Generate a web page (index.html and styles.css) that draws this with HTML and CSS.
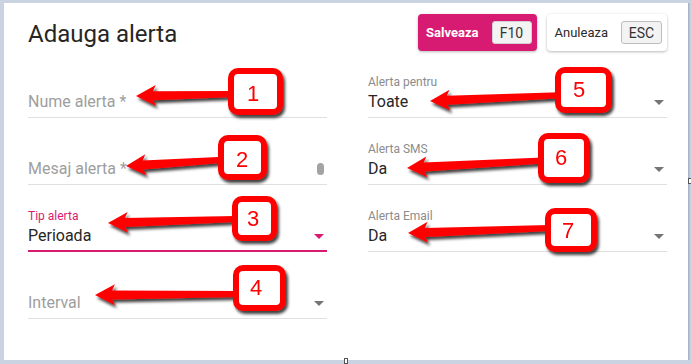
FILE: index.html
```html
<!DOCTYPE html>
<html lang="ro">
<head>
<meta charset="utf-8">
<title>Adauga alerta</title>
<link rel="stylesheet" href="styles.css">
</head>
<body>
<div class="page">
  <div class="dialog">
    <header class="dlg-head">
      <h1 class="dlg-title">Adauga alerta</h1>
      <div class="actions">
        <button class="btn btn-save"><span class="btn-label">Salveaza</span><kbd class="key">F10</kbd></button>
        <button class="btn btn-cancel"><span class="btn-label">Anuleaza</span><kbd class="key key-esc">ESC</kbd></button>
      </div>
    </header>
    <div class="form">
      <div class="col">
        <div class="field">
          <div class="field-row"><span class="placeholder">Nume alerta *</span></div>
        </div>
        <div class="field">
          <div class="field-row"><span class="placeholder">Mesaj alerta *</span><span class="scroll-pill"></span></div>
        </div>
        <div class="field field-focus">
          <div class="field-label">Tip alerta</div>
          <div class="field-row"><span class="value">Perioada</span><span class="caret"></span></div>
        </div>
        <div class="field">
          <div class="field-row"><span class="placeholder">Interval</span><span class="caret"></span></div>
        </div>
      </div>
      <div class="col">
        <div class="field">
          <div class="field-label">Alerta pentru</div>
          <div class="field-row"><span class="value">Toate</span><span class="caret"></span></div>
        </div>
        <div class="field">
          <div class="field-label">Alerta SMS</div>
          <div class="field-row"><span class="value">Da</span><span class="caret"></span></div>
        </div>
        <div class="field">
          <div class="field-label">Alerta Email</div>
          <div class="field-row"><span class="value">Da</span><span class="caret"></span></div>
        </div>
      </div>
    </div>
  </div>

  <span class="handle handle-bottom"></span>
  <span class="handle handle-right"></span>

  <svg class="annot" width="691" height="364" viewBox="0 0 691 364" xmlns="http://www.w3.org/2000/svg">
    <defs>
      <filter id="sh" x="-30%" y="-40%" width="160%" height="190%">
        <feDropShadow dx="2" dy="3" stdDeviation="1.6" flood-color="#000" flood-opacity="0.75"/>
      </filter>
    </defs>
    <g class="arrows" filter="url(#sh)">
      <polygon transform="translate(136 96) rotate(-1.2)" points="0,0 20,-10.5 17,-4.5 98,-3 98,3 17,4.5 20,10.5"/>
      <polygon transform="translate(126 166) rotate(-3.6)" points="0,0 20,-10.5 17,-4.5 98,-3 98,3 17,4.5 20,10.5"/>
      <polygon transform="translate(108 223) rotate(-1.8)" points="0,0 20,-10.5 17,-4.5 128,-3 128,3 17,4.5 20,10.5"/>
      <polygon transform="translate(95 295) rotate(-0.4)" points="0,0 20,-10.5 17,-4.5 142,-3 142,3 17,4.5 20,10.5"/>
      <polygon transform="translate(430 101) rotate(-2.5)" points="0,0 20,-10.5 17,-4.5 130,-3 130,3 17,4.5 20,10.5"/>
      <polygon transform="translate(407 168) rotate(-3.2)" points="0,0 20,-10.5 17,-4.5 136,-3 136,3 17,4.5 20,10.5"/>
      <polygon transform="translate(408 233) rotate(-2)" points="0,0 20,-10.5 17,-4.5 142,-3 142,3 17,4.5 20,10.5"/>
    </g>
    <g class="tags">
      <g class="tag"><rect x="231" y="71" width="49" height="41" rx="7"/><text x="253" y="101">1</text></g>
      <g class="tag"><rect x="221" y="138" width="43" height="39" rx="7"/><text x="242" y="167">2</text></g>
      <g class="tag"><rect x="235" y="199" width="39" height="39" rx="7"/><text x="253" y="226">3</text></g>
      <g class="tag"><rect x="236" y="268" width="47" height="40" rx="7"/><text x="256" y="295">4</text></g>
      <g class="tag"><rect x="558" y="70" width="51" height="40" rx="7"/><text x="579" y="97">5</text></g>
      <g class="tag"><rect x="541" y="136" width="46" height="44" rx="7"/><text x="561" y="165">6</text></g>
      <g class="tag"><rect x="548" y="211" width="46" height="38" rx="7"/><text x="568" y="238">7</text></g>
    </g>
  </svg>
</div>
</body>
</html>
```

FILE: styles.css
```css
* { box-sizing: border-box; }

html, body {
  margin: 0;
  padding: 0;
  width: 691px;
  height: 364px;
  overflow: hidden;
  background: #c9d3e2;
  font-family: Roboto, "Noto Sans", "Liberation Sans", sans-serif;
}

.page {
  position: relative;
  width: 691px;
  height: 364px;
  padding: 3px 3px 4px 4px;
}

.dialog {
  width: 684px;
  height: 357px;
  background: #fff;
  padding: 11px 21px 0 24px;
  box-shadow: 1px 0 0 #a9b5c7, 2px 0 0 #b7c2d2;
}

.dlg-head {
  display: flex;
  align-items: center;
  justify-content: space-between;
  height: 37px;
}

.dlg-title {
  margin: 0;
  font-size: 24px;
  font-weight: 400;
  color: #262626;
  line-height: 28px;
  padding-top: 2px;
}

.actions {
  display: flex;
  gap: 10px;
}

.btn {
  display: flex;
  align-items: center;
  height: 37px;
  padding: 0 5px 0 8px;
  border: none;
  border-radius: 4px;
  font-family: Roboto, "Liberation Sans", sans-serif;
  font-size: 13px;
  box-shadow: 0 1px 3px rgba(0, 0, 0, 0.28);
}

.btn-save {
  background: #d81b72;
  color: #fff;
  font-weight: 700;
}

.btn-cancel {
  background: #fff;
  color: #2a2a2a;
  font-weight: 400;
}

.btn-label {
  margin-right: 13px;
}

.key {
  display: flex;
  align-items: center;
  justify-content: center;
  width: 40px;
  height: 23px;
  border: 1px solid #d2d2d2;
  border-radius: 3px;
  background: #f3f3f3;
  color: #333;
  font-family: Roboto, "Liberation Sans", sans-serif;
  font-size: 14px;
  font-weight: 400;
}

.key-esc {
  width: 41px;
  border-color: #bdbdbd;
}

.form {
  display: grid;
  grid-template-columns: 1fr 1fr;
  column-gap: 41px;
}

.col {
  display: flex;
  flex-direction: column;
}

.field {
  height: 67px;
  display: flex;
  flex-direction: column;
  justify-content: flex-end;
  padding-bottom: 3px;
  border-bottom: 1px solid #e0e0e0;
}

.field-focus {
  border-bottom: 2px solid #d81b72;
  padding-bottom: 2px;
}

.field-label {
  font-size: 12px;
  line-height: 16px;
  color: #8c8c8c;
}

.field-focus .field-label {
  color: #d81b72;
}

.field-row {
  display: flex;
  align-items: center;
  justify-content: space-between;
  height: 24px;
  font-size: 16px;
  line-height: 24px;
}

.placeholder {
  color: #9e9e9e;
}

.value {
  color: #262626;
}

.caret {
  width: 0;
  height: 0;
  border-left: 5px solid transparent;
  border-right: 5px solid transparent;
  border-top: 5px solid #757575;
  margin-right: 3px;
}

.field-focus .caret {
  border-top-color: #d81b72;
}

.scroll-pill {
  width: 7px;
  height: 12px;
  border-radius: 4px;
  background: #a3a3a3;
  margin-right: 3px;
}

.handle {
  position: absolute;
  width: 4px;
  height: 6px;
  background: #fff;
  border: 1px solid #555;
}

.handle-bottom {
  left: 344px;
  top: 358px;
}

.handle-right {
  left: 688px;
  top: 178px;
}

.annot {
  position: absolute;
  left: 0;
  top: 0;
  pointer-events: none;
}

.arrows polygon {
  fill: #ff0000;
}

.tag {
  filter: url(#sh);
}

.tag rect {
  fill: #fff;
  stroke: #ff0000;
  stroke-width: 6;
}

.tag text {
  font-family: "Liberation Sans", Arial, sans-serif;
  font-size: 22px;
  fill: #ff0000;
  text-anchor: middle;
}
```
